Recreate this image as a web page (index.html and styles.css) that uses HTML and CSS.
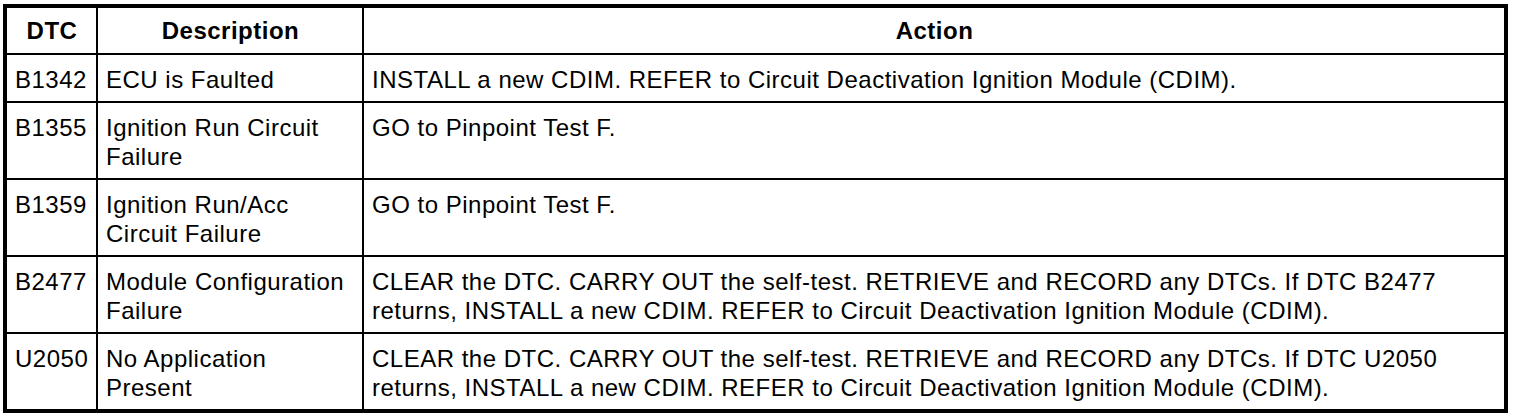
FILE: index.html
```html
<!DOCTYPE html>
<html>
<head>
<meta charset="utf-8">
<link rel="stylesheet" href="styles.css">
</head>
<body>
<table class="dtc-table">
  <colgroup>
    <col class="col-dtc">
    <col class="col-desc">
    <col class="col-action">
  </colgroup>
  <thead>
    <tr>
      <th>DTC</th>
      <th>Description</th>
      <th>Action</th>
    </tr>
  </thead>
  <tbody>
    <tr class="single">
      <td>B1342</td>
      <td>ECU is Faulted</td>
      <td>INSTALL a new CDIM. REFER to Circuit Deactivation Ignition Module (CDIM).</td>
    </tr>
    <tr>
      <td>B1355</td>
      <td>Ignition Run Circuit Failure</td>
      <td>GO to Pinpoint Test F.</td>
    </tr>
    <tr>
      <td>B1359</td>
      <td>Ignition Run/Acc Circuit Failure</td>
      <td>GO to Pinpoint Test F.</td>
    </tr>
    <tr>
      <td>B2477</td>
      <td>Module Configuration Failure</td>
      <td>CLEAR the DTC. CARRY OUT the self-test. RETRIEVE and RECORD any DTCs. If DTC B2477 returns, INSTALL a new CDIM. REFER to Circuit Deactivation Ignition Module (CDIM).</td>
    </tr>
    <tr>
      <td>U2050</td>
      <td>No Application Present</td>
      <td>CLEAR the DTC. CARRY OUT the self-test. RETRIEVE and RECORD any DTCs. If DTC U2050 returns, INSTALL a new CDIM. REFER to Circuit Deactivation Ignition Module (CDIM).</td>
    </tr>
  </tbody>
</table>
</body>
</html>
```
FILE: styles.css
```css
html, body {
  margin: 0;
  padding: 0;
  background: #fff;
}

body {
  padding: 4px 0 0 3px;
  font-family: "Liberation Sans", Arial, sans-serif;
  color: #000;
}

.dtc-table {
  table-layout: fixed;
  width: 1505px;
  border-collapse: separate;
  border-spacing: 0;
  border: 4px solid #000;
  box-sizing: border-box;
  font-size: 24px;
  line-height: 29px;
  letter-spacing: 0.5px;
}

.col-dtc { width: 91px; }
.col-desc { width: 266px; }
.col-action { width: auto; }

.dtc-table th,
.dtc-table td {
  box-sizing: border-box;
  border-right: 2px solid #000;
  border-bottom: 2px solid #000;
  padding: 10px 7px 7px 8px;
  vertical-align: top;
  text-align: left;
  font-weight: normal;
}

.dtc-table th {
  font-weight: bold;
  text-align: center;
  padding: 8px 7px 8px 8px;
}

.dtc-table th:last-child,
.dtc-table td:last-child {
  border-right: none;
}

.dtc-table tbody tr:last-child td {
  border-bottom: none;
}
```
